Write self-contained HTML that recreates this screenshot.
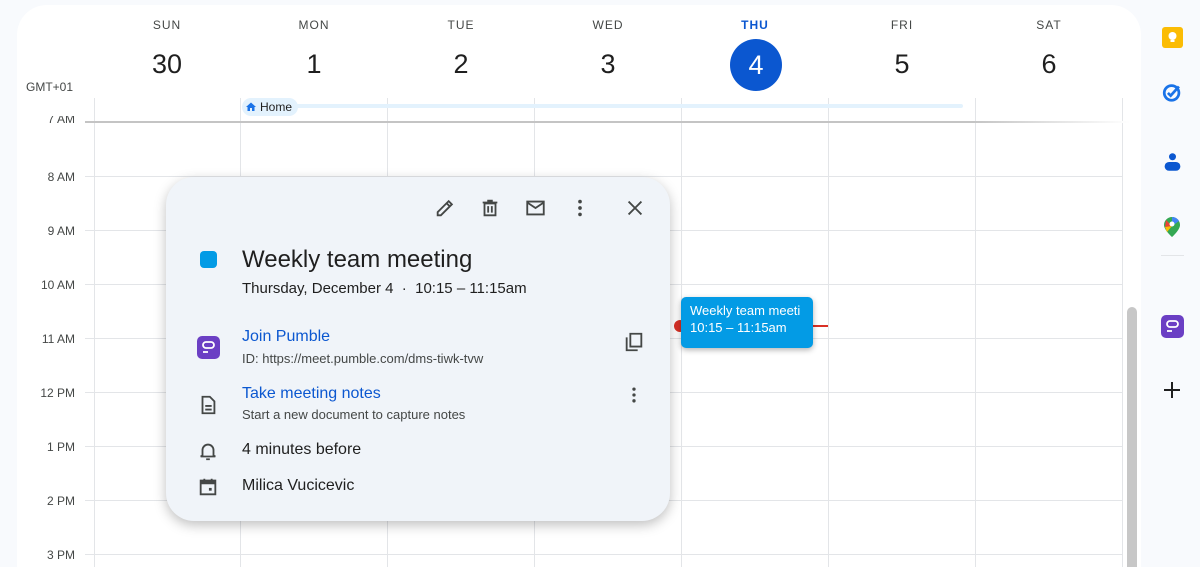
<!DOCTYPE html>
<html><head><meta charset="utf-8"><style>
*{margin:0;padding:0;box-sizing:border-box}
html{width:1200px;height:567px;overflow:hidden}
body{width:1200px;height:567px;overflow:hidden;background:#f8fafd;font-family:"Liberation Sans",sans-serif;position:relative;color:#1f1f1f}
.card{position:absolute;left:17px;top:5px;width:1124px;height:562px;background:#fff;border-radius:30px 30px 0 0;overflow:hidden}
.abs{position:absolute}
.dow{position:absolute;top:18px;width:100px;text-align:center;font-size:12px;letter-spacing:1px;color:#444746}
.num{position:absolute;top:49px;width:100px;text-align:center;font-size:27px;color:#1f1f1f}
.vl{position:absolute;top:98px;width:1px;height:469px;background:#e3e5e8}
.hl{position:absolute;left:85px;width:1037px;height:1px;background:#e3e5e8}
.tl{position:absolute;left:20px;width:55px;text-align:right;font-size:12px;color:#444746}
.ic{position:absolute}
</style></head><body>
<div class="card"></div>
<div class="dow" style="left:117px">SUN</div><div class="num" style="left:117px">30</div>
<div class="dow" style="left:264px">MON</div><div class="num" style="left:264px">1</div>
<div class="dow" style="left:411px">TUE</div><div class="num" style="left:411px">2</div>
<div class="dow" style="left:558px">WED</div><div class="num" style="left:558px">3</div>
<div class="dow" style="left:705px;color:#0b57d0;font-weight:bold">THU</div>
<div class="abs" style="left:730px;top:39px;width:52px;height:52px;border-radius:50%;background:#0b57d0;color:#fff;font-size:27px;text-align:center;line-height:52px">4</div>
<div class="dow" style="left:852px">FRI</div><div class="num" style="left:852px">5</div>
<div class="dow" style="left:999px">SAT</div><div class="num" style="left:999px">6</div>
<div class="abs" style="left:26px;top:80px;font-size:12px;color:#444746">GMT+01</div>

<div class="vl" style="left:94px"></div><div class="vl" style="left:240px"></div><div class="vl" style="left:387px"></div><div class="vl" style="left:534px"></div><div class="vl" style="left:681px"></div><div class="vl" style="left:828px"></div><div class="vl" style="left:975px"></div><div class="vl" style="left:1122px"></div>

<div class="abs" style="left:85px;top:121px;width:1045px;height:2px;background:linear-gradient(90deg,#c4c4c4 85%,#fff)"></div>
<div class="hl" style="top:176px"></div><div class="hl" style="top:230px"></div><div class="hl" style="top:284px"></div><div class="hl" style="top:338px"></div><div class="hl" style="top:392px"></div><div class="hl" style="top:446px"></div><div class="hl" style="top:500px"></div><div class="hl" style="top:554px"></div>
<div class="tl" style="top:116px;height:8px;overflow:hidden"><span style="position:relative;top:-4px">7 AM</span></div>
<div class="tl" style="top:170px">8 AM</div><div class="tl" style="top:224px">9 AM</div><div class="tl" style="top:278px">10 AM</div><div class="tl" style="top:332px">11 AM</div><div class="tl" style="top:386px">12 PM</div><div class="tl" style="top:440px">1 PM</div><div class="tl" style="top:494px">2 PM</div><div class="tl" style="top:548px">3 PM</div>

<div class="abs" style="left:290px;top:104px;width:673px;height:4px;border-radius:2px;background:#e3f2fd"></div>
<div class="abs" style="left:242px;top:98px;width:56px;height:18px;border-radius:9px;background:#e3f2fd;font-size:12px;line-height:18px;padding-left:18px;color:#1f1f1f">Home</div>
<svg class="ic" style="left:245px;top:101px" width="12" height="12" viewBox="0 0 24 24"><path d="M10 20v-6h4v6h5v-8h3L12 3 2 12h3v8z" fill="#1a73e8"/></svg>

<div class="abs" style="left:676px;top:325px;width:152px;height:2px;background:#d93025"></div>
<div class="abs" style="left:674px;top:320px;width:12px;height:12px;border-radius:50%;background:#d93025"></div>
<div class="abs" style="left:681px;top:297px;width:132px;height:51px;border-radius:5px;background:#039be5;color:#fff;padding:5px 9px;font-size:13px;line-height:17px;box-shadow:0 2px 6px rgba(0,0,0,.3);overflow:hidden;white-space:nowrap">Weekly team meeti<br>10:15 – 11:15am</div>

<div class="abs" style="left:1127px;top:307px;width:10px;height:270px;border-radius:5px;background:#c7c7c7"></div>

<div class="abs" style="left:166px;top:177px;width:504px;height:344px;border-radius:28px;background:#f0f4f9;box-shadow:0 4px 12px rgba(0,0,0,.25)"></div>
<svg class="ic" style="left:434px;top:197px" width="22" height="22" viewBox="0 0 24 24"><path d="M4 20v-3.5L16 4.5l3.5 3.5L7.5 20zM14 7l3 3" fill="none" stroke="#444746" stroke-width="2"/></svg>
<svg class="ic" style="left:479px;top:197px" width="22" height="22" viewBox="0 0 24 24"><path d="M6 7h12v13H6zM4 6h16M9 4h6M10 10v7M14 10v7" fill="none" stroke="#444746" stroke-width="2"/></svg>
<svg class="ic" style="left:524px;top:197px" width="23" height="22" viewBox="0 0 24 24"><path d="M3 5h18v14H3zM3 6l9 6 9-6" fill="none" stroke="#444746" stroke-width="2"/></svg>
<svg class="ic" style="left:569px;top:197px" width="22" height="22" viewBox="0 0 24 24"><circle cx="12" cy="5" r="2" fill="#444746"/><circle cx="12" cy="12" r="2" fill="#444746"/><circle cx="12" cy="19" r="2" fill="#444746"/></svg>
<svg class="ic" style="left:624px;top:197px" width="22" height="22" viewBox="0 0 24 24"><path d="M5 5l14 14M19 5L5 19" stroke="#444746" stroke-width="2"/></svg>

<div class="abs" style="left:200px;top:251px;width:17px;height:17px;border-radius:4px;background:#039be5"></div>
<div class="abs" style="left:242px;top:246px;font-size:24px;color:#1f1f1f">Weekly team meeting</div>
<div class="abs" style="left:242px;top:280px;font-size:15px;color:#1f1f1f">Thursday, December 4 &nbsp;·&nbsp; 10:15 – 11:15am</div>

<div class="abs" style="left:197px;top:336px;width:23px;height:23px;border-radius:5px;background:#6b3fc4"></div>
<svg class="ic" style="left:197px;top:336px" width="23" height="23" viewBox="0 0 23 23"><rect x="6" y="6" width="11" height="6" rx="3" fill="none" stroke="#fff" stroke-width="1.8"/><path d="M6 16h5" stroke="#fff" stroke-width="1.8"/></svg>
<div class="abs" style="left:242px;top:328px;font-size:16px;color:#0b57d0">Join Pumble</div>
<div class="abs" style="left:242px;top:351px;font-size:13px;color:#444746">ID: https://meet.pumble.com/dms-tiwk-tvw</div>
<svg class="ic" style="left:623px;top:331px" width="22" height="22" viewBox="0 0 24 24"><path d="M8 3h12v14H8zM4 7v14h12" fill="none" stroke="#444746" stroke-width="2"/></svg>

<svg class="ic" style="left:197px;top:393px" width="22" height="24" viewBox="0 0 24 24"><path d="M6 3h8l5 5v13H6zM9 13h7M9 17h7" fill="none" stroke="#444746" stroke-width="2"/></svg>
<div class="abs" style="left:242px;top:385px;font-size:16px;color:#0b57d0">Take meeting notes</div>
<div class="abs" style="left:242px;top:407px;font-size:13px;color:#444746">Start a new document to capture notes</div>
<svg class="ic" style="left:624px;top:385px" width="20" height="20" viewBox="0 0 24 24"><circle cx="12" cy="5" r="2" fill="#444746"/><circle cx="12" cy="12" r="2" fill="#444746"/><circle cx="12" cy="19" r="2" fill="#444746"/></svg>

<svg class="ic" style="left:197px;top:440px" width="22" height="22" viewBox="0 0 24 24"><path d="M6 17V11a6 6 0 0 1 12 0v6l2 1H4zM10 21h4" fill="none" stroke="#444746" stroke-width="2"/></svg>
<div class="abs" style="left:242px;top:441px;font-size:16px;color:#1f1f1f">4 minutes before</div>
<svg class="ic" style="left:197px;top:476px" width="22" height="22" viewBox="0 0 24 24"><path d="M4 5h16v15H4z" fill="none" stroke="#444746" stroke-width="2"/><rect x="4" y="5" width="16" height="4" fill="#444746"/><path d="M8 3v3M16 3v3" stroke="#444746" stroke-width="2"/><rect x="13" y="13" width="3" height="3" fill="#444746"/></svg>
<div class="abs" style="left:242px;top:477px;font-size:16px;color:#1f1f1f">Milica Vucicevic</div>

<div class="abs" style="left:1162px;top:27px;width:21px;height:21px;border-radius:3px;background:#fbbc04"></div>
<svg class="ic" style="left:1162px;top:27px" width="21" height="21" viewBox="0 0 21 21"><circle cx="10.5" cy="9" r="4" fill="#fff"/><rect x="8.5" y="13" width="4" height="2" fill="#fff"/></svg>
<svg class="ic" style="left:1161px;top:81px" width="23" height="22" viewBox="0 0 24 24"><circle cx="11" cy="13" r="8" fill="none" stroke="#1a73e8" stroke-width="3"/><path d="M7 13l3 3 9-10" fill="none" stroke="#1a73e8" stroke-width="3"/></svg>
<svg class="ic" style="left:1162px;top:151px" width="21" height="22" viewBox="0 0 24 24"><circle cx="12" cy="6" r="4" fill="#0b57d0"/><rect x="3" y="12" width="18" height="10" rx="5" fill="#0b57d0"/></svg>
<svg class="ic" style="left:1163px;top:216px" width="18" height="22" viewBox="0 0 18 22"><path d="M9 1a8 8 0 0 1 8 8c0 5-8 12-8 12S1 14 1 9a8 8 0 0 1 8-8z" fill="#34a853"/><path d="M3 4l6 6-7 1z" fill="#ea4335"/><path d="M9 1a8 8 0 0 1 7 4L9 10z" fill="#4285f4"/><path d="M2 11l7-1-5 6z" fill="#fbbc04"/><circle cx="9" cy="8" r="2.5" fill="#fff"/></svg>
<div class="abs" style="left:1161px;top:255px;width:23px;height:1px;background:#e3e5e8"></div>
<div class="abs" style="left:1161px;top:315px;width:23px;height:23px;border-radius:5px;background:#6b3fc4"></div>
<svg class="ic" style="left:1161px;top:315px" width="23" height="23" viewBox="0 0 23 23"><rect x="6" y="6" width="11" height="6" rx="3" fill="none" stroke="#fff" stroke-width="1.8"/><path d="M6 16h5" stroke="#fff" stroke-width="1.8"/></svg>
<svg class="ic" style="left:1163px;top:381px" width="18" height="18" viewBox="0 0 18 18"><path d="M9 1v16M1 9h16" stroke="#1f1f1f" stroke-width="2"/></svg>
</body></html>
